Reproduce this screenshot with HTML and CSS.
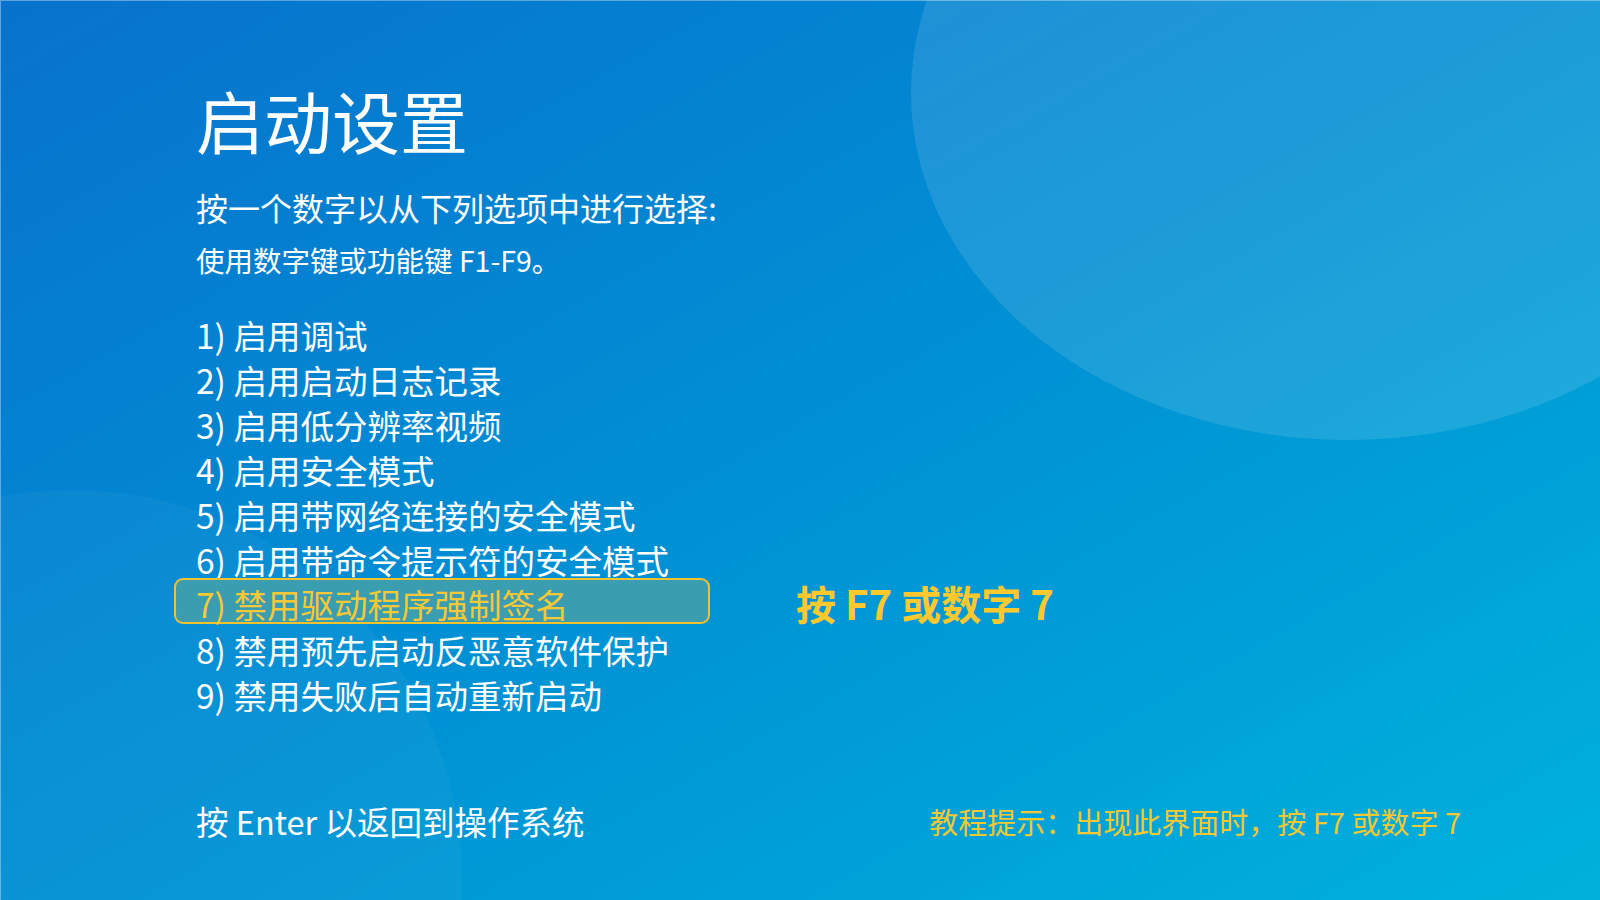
FILE: index.html
```html
<!DOCTYPE html>
<html lang="zh-CN">
<head>
<meta charset="utf-8">
<title>启动设置</title>
<link rel="stylesheet" href="styles.css">
</head>
<body>
<div class="screen">
  <div class="bubble bubble-top"></div>
  <div class="bubble bubble-bottom"></div>
  <main class="content">
    <h1 class="title">启动设置</h1>
    <p class="subtitle">按一个数字以从下列选项中进行选择:</p>
    <p class="hint">使用数字键或功能键 F1-F9。</p>
    <ol class="options">
      <li class="option">1) 启用调试</li>
      <li class="option">2) 启用启动日志记录</li>
      <li class="option">3) 启用低分辨率视频</li>
      <li class="option">4) 启用安全模式</li>
      <li class="option">5) 启用带网络连接的安全模式</li>
      <li class="option">6) 启用带命令提示符的安全模式</li>
      <li class="option option-selected">
        <span class="sel-box">7) 禁用驱动程序强制签名</span>
        <span class="callout">按 F7 或数字 7</span>
      </li>
      <li class="option">8) 禁用预先启动反恶意软件保护</li>
      <li class="option">9) 禁用失败后自动重新启动</li>
    </ol>
    <footer class="footer">
      <span class="enter">按 Enter 以返回到操作系统</span>
      <span class="tip">教程提示：出现此界面时，按 F7 或数字 7</span>
    </footer>
  </main>
</div>
</body>
</html>
```

FILE: styles.css
```css
* { box-sizing: border-box; }

html, body {
  margin: 0;
  padding: 0;
  width: 1600px;
  height: 900px;
  overflow: hidden;
}

body {
  font-family: "Noto Sans CJK SC", "Noto Sans", sans-serif;
  color: #ffffff;
}

.screen {
  position: relative;
  width: 1600px;
  height: 900px;
  overflow: hidden;
  background: linear-gradient(to bottom right, #0872cd 0%, #0090d4 50%, #00b2dc 100%);
  box-shadow: inset 1px 1px 0 rgba(255, 255, 255, 0.35);
}

.bubble {
  position: absolute;
  border-radius: 50%;
  pointer-events: none;
}

.bubble-top {
  left: 911px;
  top: -254px;
  width: 874px;
  height: 694px;
  background: rgba(255, 255, 255, 0.115);
}

.bubble-bottom {
  left: -318px;
  top: 490px;
  width: 780px;
  height: 780px;
  background: rgba(255, 255, 255, 0.035);
}

.content {
  position: relative;
  padding: 84px 139px 0 196px;
  display: flex;
  flex-direction: column;
}

.title {
  margin: 0;
  font-size: 68px;
  font-weight: 400;
  line-height: 72px;
}

.subtitle {
  margin: 31px 0 0;
  font-size: 32px;
  line-height: 40px;
  white-space: nowrap;
}

.hint {
  margin: 15px 0 0;
  font-size: 28.5px;
  line-height: 36px;
  white-space: nowrap;
}

.options {
  list-style: none;
  margin: 34px 0 0;
  padding: 0;
  display: flex;
  flex-direction: column;
}

.option {
  font-size: 33.5px;
  line-height: 45px;
  height: 45px;
  white-space: nowrap;
}

.option-selected {
  display: flex;
  align-items: flex-start;
}

.sel-box {
  margin: -4px 0 0 -22px;
  width: 536px;
  height: 46px;
  padding: 7px 0 0 20px;
  line-height: 34px;
  border: 2px solid #f2c12e;
  border-radius: 9px;
  background: #3a9db0;
  color: #f7c835;
}

.callout {
  margin-left: 86px;
  font-size: 40px;
  font-weight: 700;
  line-height: 43px;
  color: #ffc82e;
}

.footer {
  margin-top: 84px;
  display: flex;
  justify-content: space-between;
  align-items: center;
  height: 40px;
  white-space: nowrap;
}

.enter {
  font-size: 32.5px;
  line-height: 40px;
}

.tip {
  font-size: 29px;
  line-height: 40px;
  color: #f5c730;
}
```
